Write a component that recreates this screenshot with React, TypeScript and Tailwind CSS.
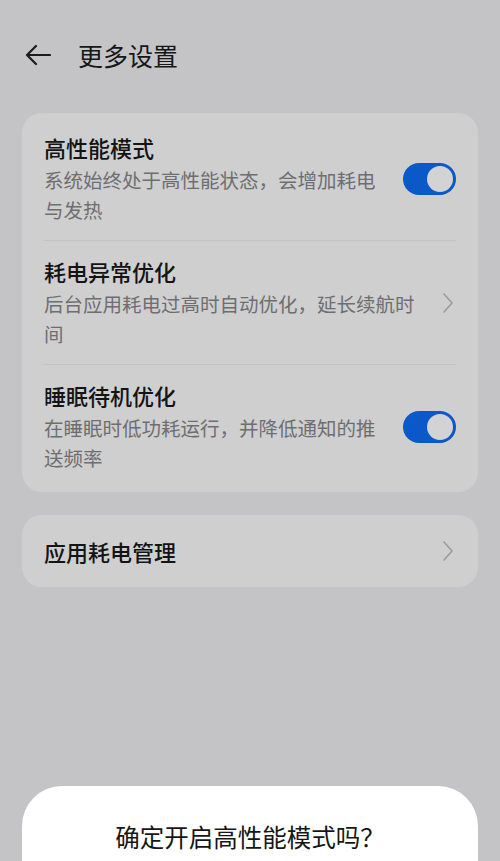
import React from "react";

const font = { fontFamily: '"Noto Sans CJK SC", "Noto Sans", sans-serif' };

function Toggle() {
  return (
    <div className="w-[53px] h-[32px] rounded-full bg-[#0b58c9] flex items-center justify-end pr-[3px] shrink-0">
      <div className="w-[26px] h-[26px] rounded-full bg-[#d3d3d4]" />
    </div>
  );
}

function Chevron() {
  return (
    <svg width="16" height="22" viewBox="0 0 16 22" className="shrink-0">
      <path d="M4 2 L12 11 L4 20" fill="none" stroke="#9c9c9e" strokeWidth="1.6" strokeLinecap="round" strokeLinejoin="round" />
    </svg>
  );
}

function Row({ title, sub, right, last }: { title: string; sub: string; right: React.ReactNode; last?: boolean }) {
  return (
    <div className={`flex items-center gap-[20px] pt-[15px] pb-[15px] ${last ? "" : "border-b border-[#c3c3c5]"}`}>
      <div className="flex-1 min-w-0">
        <div className="text-[22px] leading-[30px] mb-[3px] font-medium text-[#141414]">{title}</div>
        <div className="text-[19.5px] leading-[30px] text-[#6e6e70]">{sub}</div>
      </div>
      {right}
    </div>
  );
}

export default function App() {
  return (
    <div className="relative w-[500px] h-[861px] overflow-hidden bg-[#c4c4c6]" style={font}>
      <div className="h-[110px] flex items-center pl-[25px]">
        <svg width="26" height="22" viewBox="0 0 26 22">
          <path d="M25 11 H2 M11 2 L2 11 L11 20" fill="none" stroke="#1a1a1a" strokeWidth="2.2" strokeLinecap="round" strokeLinejoin="round" />
        </svg>
        <div className="ml-[27px] text-[25px] leading-none text-[#161616]">更多设置</div>
      </div>

      <div className="mt-[3px] mx-[22px] rounded-[20px] bg-[#cfcfd0] px-[22px] pt-[4px] pb-[4px]">
        <Row title="高性能模式" sub="系统始终处于高性能状态，会增加耗电与发热" right={<Toggle />} />
        <Row title="耗电异常优化" sub="后台应用耗电过高时自动优化，延长续航时间" right={<div className="ml-[-8px]"><Chevron /></div>} />
        <Row title="睡眠待机优化" sub="在睡眠时低功耗运行，并降低通知的推送频率" right={<Toggle />} last />
      </div>

      <div className="mt-[23px] mx-[22px] h-[72px] rounded-[20px] bg-[#cfcfd0] px-[22px] flex items-center justify-between">
        <div className="text-[22px] font-medium text-[#141414]">应用耗电管理</div>
        <Chevron />
      </div>

      <div className="absolute left-[22px] right-[22px] top-[786px] h-[200px] bg-white rounded-t-[40px] flex justify-center pt-[35px]">
        <div className="text-[24.5px] leading-[32px] text-[#161616]">确定开启高性能模式吗？</div>
      </div>
    </div>
  );
}
